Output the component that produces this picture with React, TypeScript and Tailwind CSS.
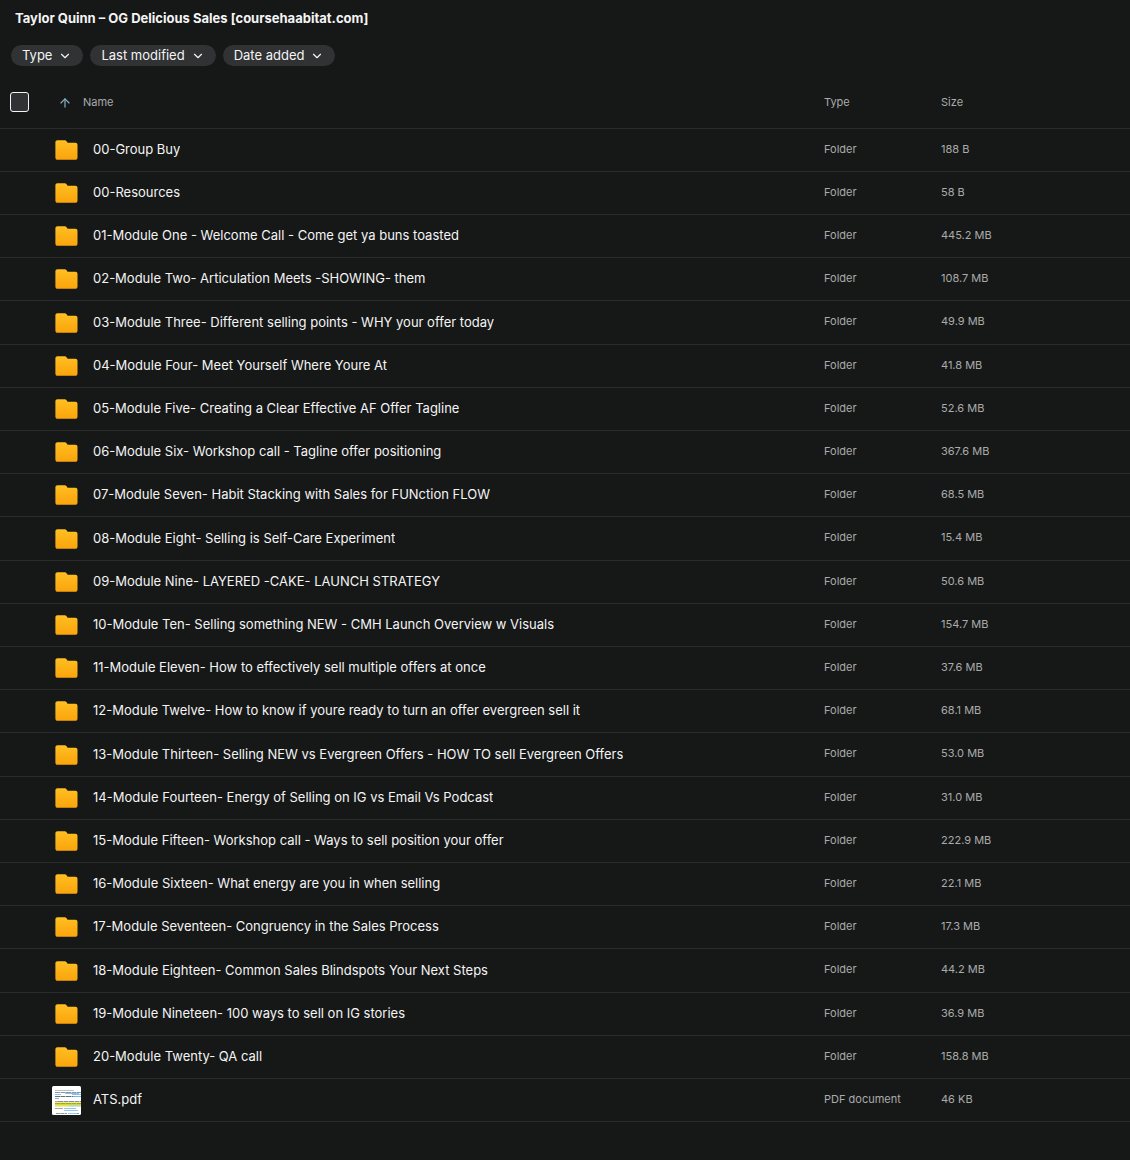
import { ArrowUp, ChevronDown } from "lucide-react";

interface FileItem {
  name: string;
  type: string;
  size: string;
}

const filters = ["Type", "Last modified", "Date added"];

const items: FileItem[] = [
  { name: "00-Group Buy", type: "Folder", size: "188 B" },
  { name: "00-Resources", type: "Folder", size: "58 B" },
  { name: "01-Module One - Welcome Call - Come get ya buns toasted", type: "Folder", size: "445.2 MB" },
  { name: "02-Module Two- Articulation Meets -SHOWING- them", type: "Folder", size: "108.7 MB" },
  { name: "03-Module Three- Different selling points - WHY your offer today", type: "Folder", size: "49.9 MB" },
  { name: "04-Module Four- Meet Yourself Where Youre At", type: "Folder", size: "41.8 MB" },
  { name: "05-Module Five- Creating a Clear Effective AF Offer Tagline", type: "Folder", size: "52.6 MB" },
  { name: "06-Module Six- Workshop call - Tagline offer positioning", type: "Folder", size: "367.6 MB" },
  { name: "07-Module Seven- Habit Stacking with Sales for FUNction FLOW", type: "Folder", size: "68.5 MB" },
  { name: "08-Module Eight- Selling is Self-Care Experiment", type: "Folder", size: "15.4 MB" },
  { name: "09-Module Nine- LAYERED -CAKE- LAUNCH STRATEGY", type: "Folder", size: "50.6 MB" },
  { name: "10-Module Ten- Selling something NEW - CMH Launch Overview w Visuals", type: "Folder", size: "154.7 MB" },
  { name: "11-Module Eleven- How to effectively sell multiple offers at once", type: "Folder", size: "37.6 MB" },
  { name: "12-Module Twelve- How to know if youre ready to turn an offer evergreen sell it", type: "Folder", size: "68.1 MB" },
  { name: "13-Module Thirteen- Selling NEW vs Evergreen Offers - HOW TO sell Evergreen Offers", type: "Folder", size: "53.0 MB" },
  { name: "14-Module Fourteen- Energy of Selling on IG vs Email Vs Podcast", type: "Folder", size: "31.0 MB" },
  { name: "15-Module Fifteen- Workshop call - Ways to sell position your offer", type: "Folder", size: "222.9 MB" },
  { name: "16-Module Sixteen- What energy are you in when selling", type: "Folder", size: "22.1 MB" },
  { name: "17-Module Seventeen- Congruency in the Sales Process", type: "Folder", size: "17.3 MB" },
  { name: "18-Module Eighteen- Common Sales Blindspots Your Next Steps", type: "Folder", size: "44.2 MB" },
  { name: "19-Module Nineteen- 100 ways to sell on IG stories", type: "Folder", size: "36.9 MB" },
  { name: "20-Module Twenty- QA call", type: "Folder", size: "158.8 MB" },
  { name: "ATS.pdf", type: "PDF document", size: "46 KB" },
];

function FolderIcon() {
  return (
    <svg className="w-[23px] h-5" viewBox="0 0 23 20" aria-hidden="true">
      <defs>
        <linearGradient id="folder" x1="0" y1="0" x2="0" y2="1">
          <stop offset="0" stopColor="#ffbf22" />
          <stop offset="1" stopColor="#fba40c" />
        </linearGradient>
      </defs>
      <path
        d="M2.500 0.200H9.700c.8 0 1.300.3 1.700.9l.8 1.100c.3.4.7.6 1.200.6h7c1.200 0 2.100.9 2.100 2.100v12.800c0 1.200-.9 2.100-2.100 2.100H2.500C1.300 19.800.400 18.900.400 17.700V2.300C.4 1.100 1.300.2 2.500.2Z"
        fill="url(#folder)"
      />
    </svg>
  );
}

function PdfThumbnail() {
  return (
    <svg className="w-[29px] h-[29px]" viewBox="0 0 29 29" aria-hidden="true">
      <rect width="29" height="29" rx="1.500" fill="#fff" />
      <path d="M3 4.500h19" stroke="#b9bfc2" />
      <path d="M3 6.500h26" stroke="#7f97aa" strokeDasharray="5 .5" />
      <path d="M3 8.500h6M20 8.500h9M13 7.500h14" stroke="#8fbfe6" />
      <path d="M3 10.500h18" stroke="#646e76" strokeDasharray="5 .5" />
      <path d="M21 10.500h8M3 12.500h4" stroke="#7bb5e0" />
      <path d="M3 15.500h3" stroke="#f29470" />
      <path d="M6 15.500h23" stroke="#87909a" strokeDasharray="5 .5" />
      <path d="M3 18h26" stroke="#d4da2c" strokeWidth="3" />
      <path d="M3 17.500h26" stroke="#a5aa1c" strokeDasharray="5 .5" />
      <path d="M3 20h14" stroke="#d4da50" />
      <path d="M17 20h12" stroke="#93c3e8" />
      <path d="M3 22.500h8" stroke="#a3abb0" />
      <path d="M12 22.500h12M12 24.500h14M16 27.500h9" stroke="#93c5ee" />
      <path d="M4 27.500h11M25 27.500h2" stroke="#8d989f" strokeDasharray="4 .5" />
    </svg>
  );
}

export default function App() {
  return (
    <main className="min-h-screen bg-[#161817] text-[#f4f4f5] font-['Inter',sans-serif]">
      <header className="px-[11px] pt-2 pb-[9px]">
        <h1 className="pl-1 text-[13px] leading-5 font-bold">
          Taylor Quinn – OG Delicious Sales [coursehaabitat.com]
        </h1>
        <div className="mt-[17px] flex gap-[7px]">
          {filters.map((label) => (
            <button
              key={label}
              type="button"
              className="flex h-[21px] items-center gap-1.5 rounded-full bg-[#303233] px-[11px] text-[13px] hover:bg-[#3b3d3e]"
            >
              <span className="pb-px leading-5">{label}</span>
              <ChevronDown className="w-3.5 h-3.5" strokeWidth={2} />
            </button>
          ))}
        </div>
      </header>

      <table className="w-full table-fixed border-separate border-spacing-0 text-left text-[11px] text-[#a9abac]">
        <colgroup>
          <col className="w-[52px]" />
          <col />
          <col className="w-[117px]" />
          <col className="w-[189px]" />
        </colgroup>
        <thead>
          <tr className="h-[54px] *:border-b *:border-[#2a2c2c] *:p-0 *:font-normal">
            <th>
              <input
                type="checkbox"
                aria-label="Select all"
                className="ml-[10px] block w-[19px] h-5 appearance-none rounded-[3px] border border-[#f4f4f5] bg-[#303233] checked:bg-[#5b8def]"
              />
            </th>
            <th>
              <button type="button" className="ml-1.5 mt-0.5 flex items-center gap-[11px]">
                <ArrowUp className="w-3.5 h-3.5 text-[#86b4c4]" strokeWidth={2} />
                Name
              </button>
            </th>
            <th>
              <span className="block pt-0.5">Type</span>
            </th>
            <th>
              <span className="block pt-0.5">Size</span>
            </th>
          </tr>
        </thead>
        <tbody>
          {items.map((item) => (
            <tr
              key={item.name}
              className="h-[43px] nth-[5n]:h-11 *:border-b *:border-[#2a2c2c] *:p-0 hover:bg-[#1d1f1f]"
            >
              <td />
              <td>
                <div className="flex items-center gap-3 text-[13px] leading-5 text-[#f4f4f5]">
                  <span className="flex w-[29px] shrink-0 justify-center">
                    {item.type === "Folder" ? <FolderIcon /> : <PdfThumbnail />}
                  </span>
                  <span className="truncate pb-0.5">{item.name}</span>
                </div>
              </td>
              <td>
                <span className="block pb-0.5">{item.type}</span>
              </td>
              <td>
                <span className="block pb-0.5">{item.size}</span>
              </td>
            </tr>
          ))}
        </tbody>
      </table>
    </main>
  );
}
